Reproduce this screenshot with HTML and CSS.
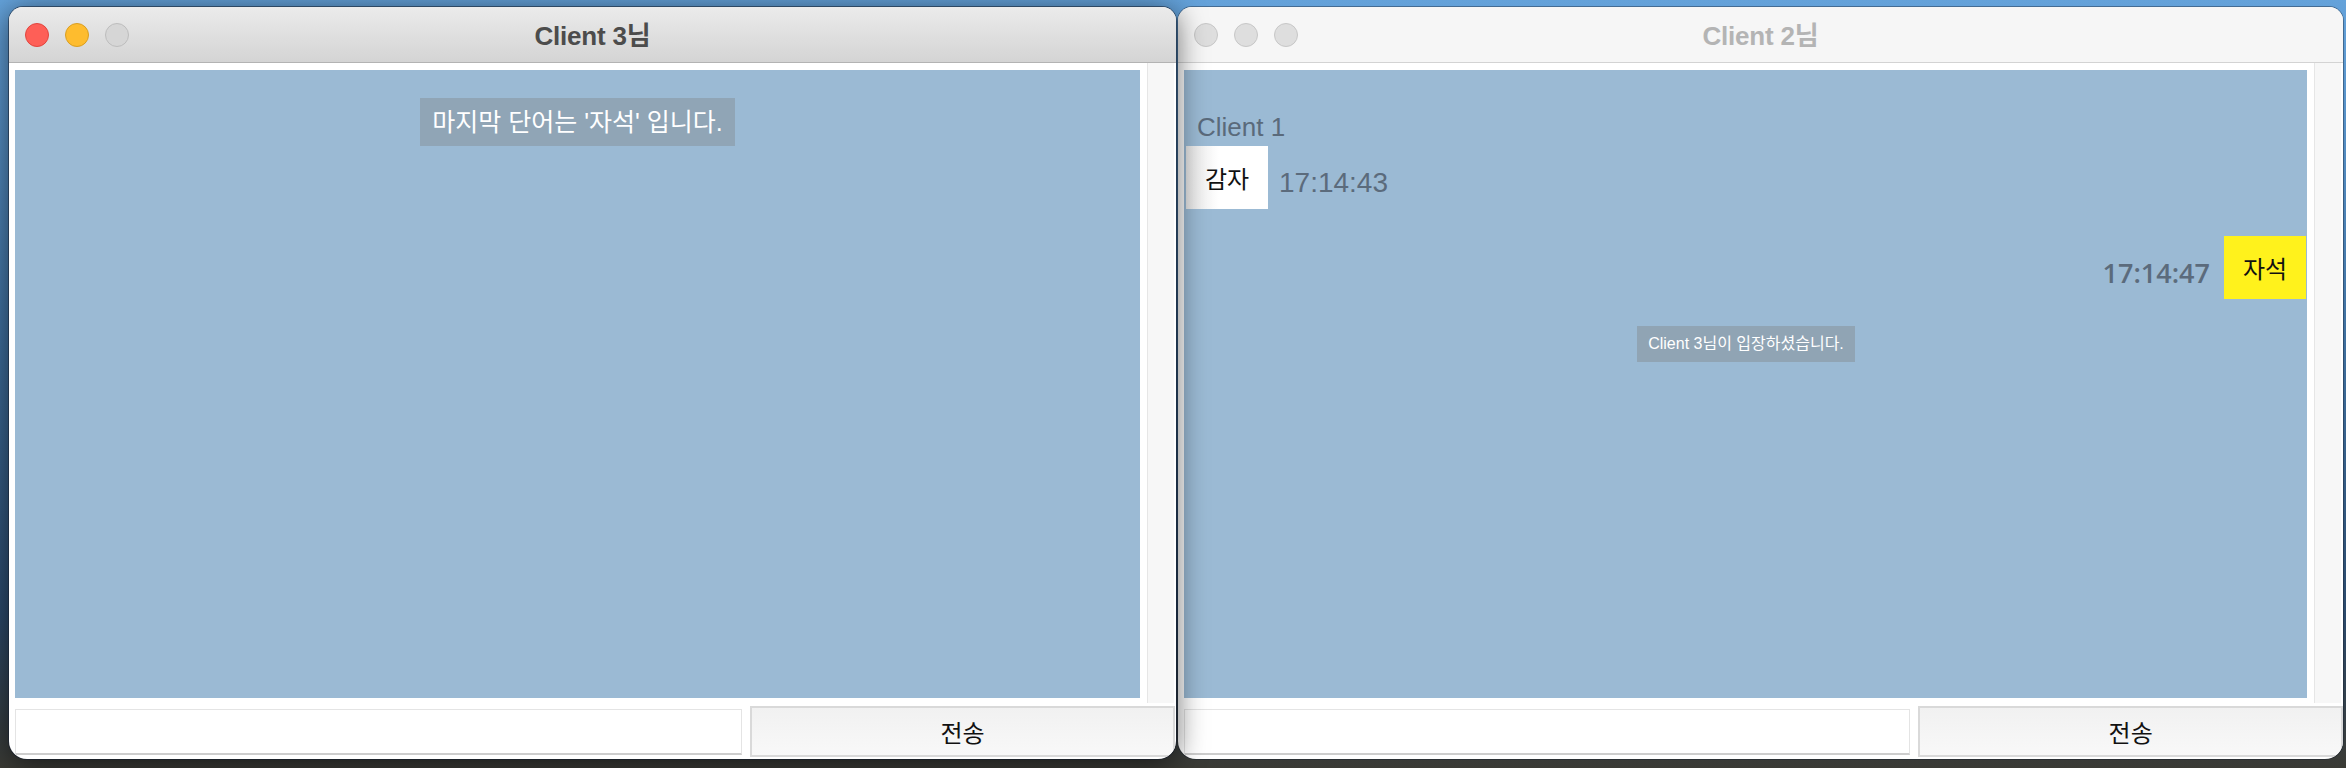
FILE: index.html
```html
<!DOCTYPE html>
<html lang="ko">
<head>
<meta charset="utf-8">
<title>Chat clients</title>
<link rel="stylesheet" href="styles.css">
</head>
<body>
<div class="desktop">
  <section class="window window-active">
    <header class="titlebar">
      <div class="lights">
        <span class="light light-red"></span>
        <span class="light light-yellow"></span>
        <span class="light light-off"></span>
      </div>
      <div class="title">Client 3님</div>
      <div></div>
    </header>
    <div class="scroll-row">
      <div class="chat">
        <div class="notice">마지막 단어는 '자석' 입니다.</div>
      </div>
      <div class="track"></div>
    </div>
    <div class="input-row">
      <div class="field"></div>
      <button class="send">전송</button>
    </div>
  </section>

  <section class="window window-inactive">
    <header class="titlebar">
      <div class="lights">
        <span class="light light-dim"></span>
        <span class="light light-dim"></span>
        <span class="light light-dim"></span>
      </div>
      <div class="title">Client 2님</div>
      <div></div>
    </header>
    <div class="scroll-row">
      <div class="chat chat-log">
        <div class="sender">Client 1</div>
        <div class="msg msg-in">
          <div class="bubble bubble-white">감자</div>
          <div class="time time-in">17:14:43</div>
        </div>
        <div class="msg msg-out">
          <div class="time time-out">17:14:47</div>
          <div class="bubble bubble-yellow">자석</div>
        </div>
        <div class="system">Client 3님이 입장하셨습니다.</div>
      </div>
      <div class="track"></div>
    </div>
    <div class="input-row">
      <div class="field"></div>
      <button class="send">전송</button>
    </div>
  </section>
</div>
</body>
</html>
```

FILE: styles.css
```css
html, body {
  margin: 0;
  padding: 0;
}

body {
  width: 2346px;
  height: 768px;
  overflow: hidden;
  font-family: "Liberation Sans", "Noto Sans CJK KR", sans-serif;
  background: linear-gradient(to bottom, #64a2da 0%, #5a95cc 12%, #3f6f9e 45%, #2c4a6c 80%, #3a3a34 100%);
}

.desktop {
  display: flex;
  gap: 2px;
  padding: 7px 0 0 9px;
  height: 768px;
  box-sizing: border-box;
}

.window {
  height: 752px;
  display: flex;
  flex-direction: column;
  background: #ffffff;
  border-radius: 14px 14px 18px 18px;
  overflow: hidden;
}

.window-active {
  width: 1167px;
  position: relative;
  z-index: 2;
  box-shadow: 0 0 0 1px rgba(20, 30, 45, 0.55), 0 4px 30px rgba(0, 0, 0, 0.6);
}

.window-inactive {
  width: 1165px;
  position: relative;
  z-index: 1;
  box-shadow: 0 0 0 1px rgba(20, 30, 45, 0.4);
}

.titlebar {
  height: 55px;
  flex: none;
  display: grid;
  grid-template-columns: 1fr auto 1fr;
  align-items: center;
}

.window-active .titlebar {
  background: linear-gradient(to bottom, #ebebeb, #d4d4d4);
  border-bottom: 1px solid #b3b3b3;
}

.window-inactive .titlebar {
  background: #f6f6f6;
  border-bottom: 1px solid #d3d3d3;
}

.lights {
  display: flex;
  gap: 16px;
  padding-left: 16px;
}

.light {
  width: 22px;
  height: 22px;
  border-radius: 50%;
  border: 1px solid transparent;
}

.light-red { background: #fe5f57; border-color: #e1453e; }
.light-yellow { background: #febc2e; border-color: #d99e22; }
.light-off { background: #d6d6d6; border-color: #bdbdbd; }
.light-dim { background: #dedede; border-color: #c7c7c7; }

.title {
  font-size: 26px;
  font-weight: bold;
  letter-spacing: -0.2px;
  margin-top: -2px;
}

.window-active .title { color: #4c4c4c; }
.window-inactive .title { color: #b4b4b4; }

.scroll-row {
  height: 640px;
  flex: none;
  display: flex;
  gap: 7px;
  padding: 0 2px 0 6px;
}

.chat {
  flex: 1;
  margin: 7px 0 5px 0;
  background: #9bbad4;
  display: flex;
  flex-direction: column;
}

.track {
  width: 26px;
  background: #f7f7f7;
  border-left: 1px solid #e6e6e6;
}

.notice {
  align-self: center;
  margin-top: 28px;
  height: 48px;
  line-height: 48px;
  padding: 0 12px;
  background: #90a5b6;
  color: #ffffff;
  font-size: 25px;
}

.chat-log {
  padding: 0 1px 0 2px;
}

.sender {
  margin: 42px 0 0 11px;
  font-size: 26px;
  line-height: 30px;
  color: #5a6a7b;
}

.msg {
  display: flex;
  align-items: center;
}

.msg-in {
  margin-top: 4px;
  gap: 11px;
}

.msg-out {
  margin-top: 27px;
  justify-content: flex-end;
  gap: 14px;
}

.bubble {
  width: 82px;
  height: 63px;
  display: flex;
  align-items: center;
  justify-content: center;
  font-size: 24px;
  color: #111111;
}

.bubble-white {
  background: linear-gradient(to right, #e6e6e6, #ffffff 40%);
}

.bubble-yellow {
  background: #fff21c;
}

.time {
  margin-top: 10px;
  color: #5b6b7c;
}

.time-in {
  font-size: 28px;
}

.time-out {
  font-family: "Open Sans", "Liberation Sans", sans-serif;
  font-size: 27px;
  font-weight: 600;
}

.system {
  align-self: center;
  margin-top: 27px;
  height: 36px;
  line-height: 36px;
  padding: 0 11px;
  background: #90a4b4;
  color: #ffffff;
  font-size: 16px;
}

.input-row {
  flex: 1;
  display: flex;
  align-items: flex-start;
  gap: 8px;
  padding-left: 6px;
}

.field {
  width: 725px;
  height: 43px;
  margin-top: 6px;
  background: #ffffff;
  border: 1px solid #e4e4e4;
  border-bottom: 2px solid #cdcdcd;
}

.send {
  width: 425px;
  height: 51px;
  margin: 3px 0 0 0;
  padding: 0;
  border: 2px solid #d9d9d9;
  background: linear-gradient(to bottom, #f1f1f1, #f8f8f8);
  font-family: "Liberation Sans", "Noto Sans CJK KR", sans-serif;
  font-size: 24px;
  color: #111111;
}
```
